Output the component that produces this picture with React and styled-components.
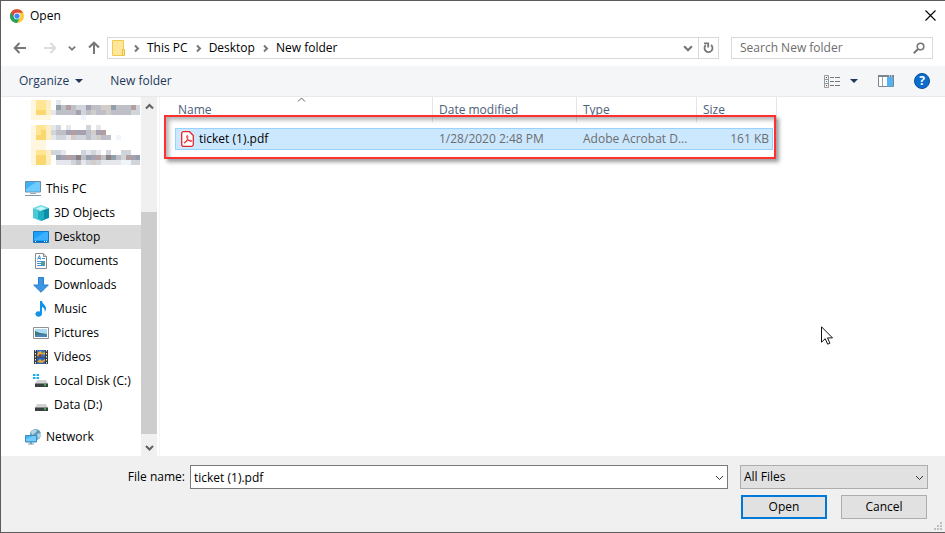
import React, { useState } from 'react';
import styled, { createGlobalStyle } from 'styled-components';

const GlobalStyle = createGlobalStyle`
  * {
    box-sizing: border-box;
  }
  body {
    margin: 0;
    background: white;
    color: black;
  }
  body, button, input, select {
    font-family: 'Open Sans', 'Noto Sans', sans-serif;
    font-size: 12px;
    line-height: 16px;
  }
  button {
    padding: 0;
    border: none;
    background: none;
    color: inherit;
  }
  svg {
    display: block;
    flex: none;
  }
`;

const Dialog = styled.div`
  position: relative;
  display: flex;
  flex-direction: column;
  min-height: 100vh;
  border: 1px solid #5c5c5c;
  border-right: none;
  background: white;
`;
const TitleBar = styled.header`
  display: flex;
  align-items: center;
  gap: 6px;
  height: 29px;
  padding: 0 9px;
`;
const Title = styled.h1`
  flex: 1;
  margin: 0;
  font-size: 12px;
  font-weight: 400;
`;
const NavBar = styled.div`
  display: flex;
  align-items: center;
  height: 36px;
  padding: 0 12px;
`;
const History = styled.div`
  display: flex;
  align-items: center;
  gap: 11px;
  margin-right: 6px;
`;
const HistoryButton = styled.button`
  &:first-child {
    margin-right: 5px;
  }
`;
const AddressBar = styled.div`
  display: flex;
  flex: 1;
  height: 22px;
  margin-right: 12px;
  border: 1px solid #d9d9d9;
`;
const Crumbs = styled.nav`
  display: flex;
  flex: 1;
  align-items: center;
  gap: 6px;
  padding-left: 4px;
`;
const AddressButton = styled.button`
  display: flex;
  align-items: center;
  justify-content: center;
  width: 20px;
  border-left: ${({ $divided }) => ($divided ? '1px solid #d9d9d9' : 'none')};
`;
const SearchBox = styled.label`
  display: flex;
  align-items: center;
  width: 202px;
  height: 22px;
  padding: 0 7px;
  border: 1px solid #d9d9d9;
`;
const SearchInput = styled.input`
  flex: 1;
  min-width: 0;
  padding: 0 0 0 1px;
  border: none;
  outline: none;
  &::placeholder {
    color: #6d6d6d;
  }
`;
const Toolbar = styled.div`
  display: flex;
  align-items: center;
  gap: 27px;
  height: 31px;
  padding: 0 15px 0 18px;
  border-bottom: 1px solid #e8e9ea;
  background: #f5f6f7;
  color: #1e395b;
`;
const ToolButton = styled.button`
  display: flex;
  align-items: center;
  gap: ${({ $gap }) => $gap || 6}px;
`;
const Tools = styled.div`
  display: flex;
  align-items: center;
  gap: 20px;
  margin-left: auto;
`;
const HelpMark = styled.span`
  display: flex;
  align-items: center;
  justify-content: center;
  width: 16px;
  height: 16px;
  border: 1px solid #0a4f9c;
  border-radius: 50%;
  background: #0a6cce;
  color: white;
  font-weight: 700;
`;

const Content = styled.div`
  display: flex;
  flex: 1;
`;
const Sidebar = styled.aside`
  display: flex;
  width: 159px;
  padding-right: 2px;
  border-right: 1px solid #f5f5f5;
`;
const Tree = styled.ul`
  display: flex;
  flex: 1;
  flex-direction: column;
  gap: 8px;
  margin: 0;
  padding: 0;
  list-style: none;
`;
const TreeItem = styled.button`
  display: flex;
  align-items: center;
  gap: 5px;
  width: 100%;
  height: 24px;
  padding-left: ${({ $nested }) => ($nested ? 32 : 24)}px;
  background: ${({ $selected }) => ($selected ? '#d9d9d9' : 'none')};
  text-align: left;
  white-space: nowrap;
`;
const Scrollbar = styled.div`
  display: flex;
  flex-direction: column;
  width: 16px;
  background: #f0f0f0;
`;
const ScrollButton = styled.button`
  display: flex;
  align-items: center;
  justify-content: center;
  height: 18px;
`;
const ScrollThumb = styled.div`
  flex: 222;
  margin-bottom: 4px;
  background: #cdcdcd;
`;
const ScrollSpace = styled.div`
  flex: 97;
`;

const FileArea = styled.main`
  position: relative;
  flex: 1;
  padding-left: 15px;
`;
const FileTable = styled.table`
  display: block;
  width: 602px;
  color: #6d6d6d;
  thead,
  tbody {
    display: block;
  }
`;
const HeadRow = styled.tr`
  display: grid;
  grid-template-columns: 258px 144px 120px 80px;
  height: 25px;
`;
const HeadCell = styled.th`
  position: relative;
  padding: 5px 6px 0 ${({ $first }) => ($first ? 3 : 6)}px;
  border-right: 1px solid #e5e5e5;
  color: #4c607a;
  font-weight: 400;
  text-align: left;
`;
const SortMark = styled.span`
  position: absolute;
  top: -2px;
  right: 4px;
  left: 0;
  display: flex;
  justify-content: center;
`;
const FileRow = styled.tr`
  display: grid;
  grid-template-columns: 258px 144px 120px 1fr;
  align-items: center;
  height: 22px;
  margin: 0 4px 0 0;
  background: #cce8ff;
  outline: 1px solid #99d1ff;
  outline-offset: -1px;
`;
const FileRows = styled.tbody`
  padding-top: 6px;
`;
const FileCell = styled.td`
  display: flex;
  justify-content: ${({ $right }) => ($right ? 'flex-end' : 'flex-start')};
  align-items: center;
  gap: 5px;
  padding: 0 4px 0 6px;
  color: ${({ $strong }) => ($strong ? 'black' : 'inherit')};
  white-space: nowrap;
`;
const Highlight = styled.div`
  position: absolute;
  top: 18px;
  left: 4px;
  width: 612px;
  height: 44px;
  border: 2px solid #ff3030;
  box-shadow:
    3px 3px 4px rgba(0, 0, 0, 0.4),
    inset 3px 3px 4px rgba(0, 0, 0, 0.3);
  pointer-events: none;
`;
const Pointer = styled.div`
  position: absolute;
  top: 229px;
  left: 661px;
`;

const Footer = styled.form`
  position: relative;
  padding: 9px 17px 13px 0;
  background: #f0f0f0;
`;
const FieldRow = styled.div`
  display: flex;
  align-items: center;
`;
const FileLabel = styled.label`
  width: 189px;
  padding-right: 5px;
  text-align: right;
`;
const Field = styled.div`
  position: relative;
  display: flex;
  align-items: center;
  flex: ${({ $width }) => ($width ? `0 0 ${$width}px` : '1')};
  margin-right: ${({ $width }) => ($width ? 0 : 12)}px;
`;
const FileInput = styled.input`
  width: 100%;
  height: 24px;
  padding: 0 24px 0 3px;
  border: 1px solid #7a7a7a;
  border-radius: 0;
  background: white;
  outline: none;
`;
const TypeSelect = styled.select`
  width: 100%;
  height: 24px;
  padding: 0 24px 0 3px;
  appearance: none;
  border: 1px solid #adadad;
  border-radius: 0;
  background: #e1e1e1;
  color: black;
`;
const FieldArrow = styled.span`
  position: absolute;
  right: 4px;
  pointer-events: none;
`;
const Actions = styled.div`
  display: flex;
  justify-content: flex-end;
  gap: 14px;
  margin-top: 6px;
  padding-right: 1px;
`;
const ActionButton = styled.button`
  width: 86px;
  height: 24px;
  border: ${({ $primary }) => ($primary ? '2px solid #0078d7' : '1px solid #adadad')};
  background: #e1e1e1;
`;
const Grip = styled.div`
  position: absolute;
  right: 3px;
  bottom: 2px;
`;

function Chevron({ dir = 'down', size = 9, color = '#606060', weight = 2 }) {
  const paths = {
    down: 'M1 3l3.5 3.5L8 3',
    up: 'M1 6.5L4.5 3L8 6.5',
    right: 'M3 1.5l3 3-3 3',
  };
  return (
    <svg width={size} height={size} viewBox="0 0 9 9" fill="none" stroke={color} strokeWidth={weight}>
      <path d={paths[dir]} />
    </svg>
  );
}

function Arrow({ dir, color = '#777' }) {
  const turn = { left: 0, right: 180, up: 90 }[dir];
  return (
    <svg width="14" height="14" viewBox="0 0 14 14" fill="none" stroke={color} strokeWidth="2">
      <path transform={`rotate(${turn} 7 7)`} d="M13 7H2M6.5 2L1.7 7l4.800 5" />
    </svg>
  );
}

function Triangle() {
  return (
    <svg width="8" height="4" viewBox="0 0 8 4">
      <path d="M0 0h8L4 4z" fill="#1e395b" />
    </svg>
  );
}

function ChromeIcon() {
  return (
    <svg width="14" height="14" viewBox="0 0 48 48">
      <circle cx="24" cy="24" r="24" fill="#fcc934" />
      <path d="M24 24L3.200 12A24 24 0 0 0 24 48l10.400-18z" fill="#1ea362" />
      <path d="M24 13h20.800A24 24 0 0 0 3.200 12L14.500 30z" fill="#dd4b3e" />
      <circle cx="24" cy="24" r="11.500" fill="#fff" />
      <circle cx="24" cy="24" r="9" fill="#4285f4" />
    </svg>
  );
}

function CloseIcon() {
  return (
    <svg width="11" height="11" viewBox="0 0 11 11" stroke="#000" strokeWidth="1.1">
      <path d="M.5.5l10 10M10.500.5l-10 10" />
    </svg>
  );
}

function FolderIcon() {
  return (
    <svg width="14" height="16" viewBox="0 0 14 16">
      <path d="M.5.5h11v15H.5z" fill="#ffe69a" stroke="#f2c94f" />
      <path d="M10.500 9.500h2v6h-2z" fill="#ffe69a" stroke="#eabf3d" />
    </svg>
  );
}

function RefreshIcon() {
  return (
    <svg width="11" height="12" viewBox="0 0 11 12" fill="none" stroke="#777" strokeWidth="1.8">
      <path d="M2.800 3.200A4 4 0 1 0 8 3" />
      <path d="M1 1.400h4.200v4" />
    </svg>
  );
}

function SearchIcon() {
  return (
    <svg width="12" height="12" viewBox="0 0 12 12" fill="none" stroke="#777">
      <circle cx="7.500" cy="4.500" r="3.300" strokeWidth="1.600" />
      <path d="M5 7L.8 11.200" strokeWidth="2" />
    </svg>
  );
}

function ViewIcon() {
  return (
    <svg width="16" height="13" viewBox="0 0 16 13" fill="none">
      <path d="M.5.5h4v12h-4zM.5 4.500h4M.5 8.500h4" stroke="#9a9a9a" />
      <path d="M6 2.500h4M11 2.500h5M6 6.500h4M11 6.500h5M6 10.500h4M11 10.500h5" stroke="#777" />
      <path d="M2 2h1v1H2z" fill="#444" />
      <path d="M2 6h1v1H2z" fill="#2e8ae0" />
      <path d="M2 10h1v1H2z" fill="#c22" />
    </svg>
  );
}

function PreviewIcon() {
  return (
    <svg width="16" height="12" viewBox="0 0 16 12">
      <path d="M.5.5h15v11H.5z" fill="#fff" stroke="#7b8790" />
      <path d="M0 0h16v2H0z" fill="#7b8790" />
      <path d="M4.500 2v9" stroke="#9aa4ab" />
      <path d="M9 2h6v9.500H9z" fill="#55b1f1" />
      <path d="M11 1h1M13 1h1" stroke="#fff" />
    </svg>
  );
}

function PcIcon() {
  return (
    <svg width="16" height="16" viewBox="0 0 16 16">
      <path d="M.5.5h15v10.500H.5z" fill="#3fb1f7" stroke="#6e8da3" />
      <path d="M1 10.500V8L11 1h4v9.500z" fill="#6fcbff" />
      <path d="M5 12h6v1H5z" fill="#9ab" />
      <path d="M0 14.500h16" stroke="#8298a8" />
    </svg>
  );
}

function ObjectsIcon() {
  return (
    <svg width="16" height="16" viewBox="0 0 16 16">
      <path d="M0 3l8-3 8 3-8 3z" fill="#6fdbe4" />
      <path d="M0 3l8 3v10l-8-3z" fill="#4cc8d6" />
      <path d="M16 3L8 6v10l8-3z" fill="#0c8fa6" />
      <path d="M5 6l3 1 3-1v8l-3 1-3-1z" fill="#20aec2" />
      <path d="M3 3.500l5-2 5 2-5 2z" fill="#c9f3f6" />
    </svg>
  );
}

function DesktopIcon() {
  return (
    <svg width="16" height="12" viewBox="0 0 16 12">
      <path d="M.5.5h15v11H.5z" fill="#18a0fb" stroke="#1579c4" />
      <path d="M1 8L12 1h3v8H1z" fill="#3db1ff" />
      <path d="M1 10.500h14" stroke="#106ab8" />
      <path d="M2 10.500h1M11 10.500h1M13 10.500h1" stroke="#fff" />
    </svg>
  );
}

function DocumentIcon() {
  return (
    <svg width="16" height="16" viewBox="0 0 16 16">
      <path d="M2.500.5h8l3 3v12h-11z" fill="#fff" stroke="#8b8b8b" />
      <path d="M10.500.5v3h3" fill="#ddd" stroke="#8b8b8b" />
      <path
        d="M4.500 6.500l2-4 1 4M5 5.500h3M9 5.500h3M4 8.500h8M4 10.500h4M4 12.500h8"
        fill="none"
        stroke="#3f95d6"
      />
      <path d="M8 9h4v3H8z" fill="#5b9c90" />
    </svg>
  );
}

function DownloadIcon() {
  return (
    <svg width="16" height="16" viewBox="0 0 16 16">
      <path d="M5.500.5h5v7.500h4.800L8 15.300.7 8h4.800z" fill="#3b97e3" stroke="#2b7fc9" />
    </svg>
  );
}

function MusicIcon() {
  return (
    <svg width="16" height="16" viewBox="0 0 16 16">
      <path
        d="M7 0h2c.3 3 4 4 4 7.500 0 1.500-.6 2.700-1.300 3.500.5-3-1-4.500-2.700-5v7a3.300 2.700 0 1 1-2-2.500z"
        fill="#1292e8"
      />
    </svg>
  );
}

function PictureIcon() {
  return (
    <svg width="16" height="12" viewBox="0 0 16 12">
      <path d="M.5.5h15v11H.5z" fill="#fff" stroke="#929292" />
      <path d="M2 2h12v8H2z" fill="#aadcf8" />
      <path d="M2 4l5 2 7 1v3H2z" fill="#39776f" />
      <path d="M2 8c4-1 8 0 12-1v3H2z" fill="#4884b9" />
    </svg>
  );
}

function VideoIcon() {
  return (
    <svg width="16" height="16" viewBox="0 0 16 16">
      <path d="M1 1h14v14H1z" fill="#3b3b3b" />
      <path d="M4 1h8v7H4z" fill="#3474c4" />
      <path d="M4 8.500h8V15H4z" fill="#2b66b8" />
      <path d="M5 3l3-1 1 2 3-1v3L9 5 7 7H4zM4 13l3-3 2 2 3-2v2l-3 2z" fill="#e0a83c" />
      <path d="M7 5l2 1-1 2-3-1z" fill="#8e3f35" />
      <path d="M2.500 1v14M13.500 1v14" stroke="#e9e9e9" strokeDasharray="1.500 1.500" />
    </svg>
  );
}

function DiskIcon({ system }) {
  return (
    <svg width="16" height="16" viewBox="0 0 16 16">
      {system && (
        <path d="M0 1h2.500v2H0zM3.500 1H6v2H3.500zM0 4h2.500v2H0zM3.500 4H6v2H3.500z" fill="#12b0ef" />
      )}
      <path d="M4 7h9l2 4H2z" fill="#cfd1d2" />
      <path d="M2 10.500h13V14H2z" fill="#3c4043" />
      <path d="M11 12h2" stroke="#35d04c" strokeWidth="1.500" />
    </svg>
  );
}

function NetworkIcon() {
  return (
    <svg width="16" height="16" viewBox="0 0 16 16">
      <circle cx="10.500" cy="5.500" r="5.500" fill="#5f9cc0" />
      <path d="M6 3c2-3 5-3 6-1L9 5 7 6zM12 5l4-1v3l-3 3z" fill="#b6d5e3" />
      <path d="M.5 6.500h11v6.500H.5z" fill="#42b6f6" stroke="#4689b4" />
      <path d="M1 12V10l7-3h3v5z" fill="#72cdfc" />
      <path d="M5 13h2v1.500H5zM3 14.500h6v1H3z" fill="#7d9bac" />
    </svg>
  );
}

function PdfIcon() {
  return (
    <svg width="13" height="16" viewBox="0 0 13 16" fill="none" stroke="#e8252a">
      <path
        d="M2.500.7h6L12.300 4.500v9q0 1.800-1.800 1.800h-8Q.7 15.300.7 13.500v-11Q.7.7 2.500.7z"
        fill="#fff"
        strokeWidth="1.300"
      />
      <path
        d="M6.300 4.500c-1 0-.8 1.500 0 3S9 10.500 10 10.500s1-1.200-.5-1.200c-2 0-4 .6-5.200 1.300-1.600 1-1.200 1.700-.6 1.500C5 11.500 6.300 9 6.600 7.500 7 6 7 4.500 6.300 4.500z"
        strokeWidth="1"
      />
    </svg>
  );
}

// masked quick access entries, one character per 5px block
const maskColors = {
  a: '#fff6e0', b: '#ffe594', c: '#fbd86f', d: '#fdeec2',
  0: '#f0f5fb', 1: '#e6e7ec', 2: '#d0d5dc', 3: '#bfbfc8', 4: '#a5a1b0',
  5: '#929eac', 6: '#d3cdca', 7: '#b59e9f', 8: '#8d8083',
};
const maskRows = [
  'abbd.1',
  'abbd.53732243366533372',
  'accd133334236336333322',
  'aaaa......0',
  '',
  'abbd12.1...2.1',
  'abcd23347443647',
  'accd122162232633.0',
  'aaa',
  'aaa',
  'abbd221...2121.2..22',
  'accd.54748354738532745',
  'accd.11123126211110022',
];

function MaskedEntries() {
  return (
    <svg width="139" height="72" viewBox="0 0 139 72">
      {maskRows.map((row, y) =>
        [...row.replace(/\s/g, '')].map((key, x) =>
          maskColors[key] ? (
            <rect key={x} x={30 + x * 5} y={3 + y * 5} width="5" height="5" fill={maskColors[key]} />
          ) : null,
        ),
      )}
    </svg>
  );
}

const places = [
  { name: '3D Objects', icon: <ObjectsIcon /> },
  { name: 'Desktop', icon: <DesktopIcon /> },
  { name: 'Documents', icon: <DocumentIcon /> },
  { name: 'Downloads', icon: <DownloadIcon /> },
  { name: 'Music', icon: <MusicIcon /> },
  { name: 'Pictures', icon: <PictureIcon /> },
  { name: 'Videos', icon: <VideoIcon /> },
  { name: 'Local Disk (C:)', icon: <DiskIcon system /> },
  { name: 'Data (D:)', icon: <DiskIcon /> },
];
const crumbs = ['This PC', 'Desktop', 'New folder'];

function App() {
  const [place, setPlace] = useState('Desktop');
  const [fileName, setFileName] = useState('ticket (1).pdf');
  const [search, setSearch] = useState('');

  return (
    <>
      <GlobalStyle />
      <Dialog>
        <TitleBar>
          <ChromeIcon />
          <Title>Open</Title>
          <button type="button" aria-label="Close">
            <CloseIcon />
          </button>
        </TitleBar>
        <NavBar>
          <History>
            <HistoryButton type="button" aria-label="Back">
              <Arrow dir="left" />
            </HistoryButton>
            <HistoryButton type="button" aria-label="Forward">
              <Arrow dir="right" color="#dcdcdc" />
            </HistoryButton>
            <HistoryButton type="button" aria-label="Recent locations">
              <Chevron size={8} color="#777" />
            </HistoryButton>
            <HistoryButton type="button" aria-label="Up">
              <Arrow dir="up" />
            </HistoryButton>
          </History>
          <AddressBar>
            <Crumbs>
              <FolderIcon />
              {crumbs.map((crumb) => (
                <React.Fragment key={crumb}>
                  <Chevron dir="right" color="#777" />
                  <button type="button">{crumb}</button>
                </React.Fragment>
              ))}
            </Crumbs>
            <AddressButton type="button" aria-label="Previous locations">
              <Chevron size={10} color="#777" />
            </AddressButton>
            <AddressButton type="button" aria-label="Refresh" $divided>
              <RefreshIcon />
            </AddressButton>
          </AddressBar>
          <SearchBox>
            <SearchInput
              value={search}
              onChange={(event) => setSearch(event.target.value)}
              placeholder="Search New folder"
              aria-label="Search New folder"
            />
            <SearchIcon />
          </SearchBox>
        </NavBar>
        <Toolbar>
          <ToolButton type="button">
            Organize <Triangle />
          </ToolButton>
          <ToolButton type="button">New folder</ToolButton>
          <Tools>
            <ToolButton type="button" aria-label="Change view" $gap={10}>
              <ViewIcon />
              <Triangle />
            </ToolButton>
            <ToolButton type="button" aria-label="Preview pane">
              <PreviewIcon />
            </ToolButton>
            <ToolButton type="button" aria-label="Help">
              <HelpMark>?</HelpMark>
            </ToolButton>
          </Tools>
        </Toolbar>
        <Content>
          <Sidebar>
            <Tree>
              <li>
                <MaskedEntries />
              </li>
              <li>
                <TreeItem type="button">
                  <PcIcon />
                  This PC
                </TreeItem>
                {places.map(({ name, icon }) => (
                  <TreeItem
                    key={name}
                    type="button"
                    $nested
                    $selected={name === place}
                    onClick={() => setPlace(name)}
                  >
                    {icon}
                    {name}
                  </TreeItem>
                ))}
              </li>
              <li>
                <TreeItem type="button">
                  <NetworkIcon />
                  Network
                </TreeItem>
              </li>
            </Tree>
            <Scrollbar>
              <ScrollButton type="button" aria-label="Scroll up">
                <Chevron dir="up" />
              </ScrollButton>
              <ScrollSpace />
              <ScrollThumb />
              <ScrollButton type="button" aria-label="Scroll down">
                <Chevron />
              </ScrollButton>
            </Scrollbar>
          </Sidebar>
          <FileArea>
            <FileTable>
              <thead>
                <HeadRow>
                  <HeadCell $first>
                    Name
                    <SortMark>
                      <Chevron dir="up" weight={1} />
                    </SortMark>
                  </HeadCell>
                  <HeadCell>Date modified</HeadCell>
                  <HeadCell>Type</HeadCell>
                  <HeadCell>Size</HeadCell>
                </HeadRow>
              </thead>
              <FileRows>
                <FileRow>
                  <FileCell $strong>
                    <PdfIcon />
                    ticket (1).pdf
                  </FileCell>
                  <FileCell>1/28/2020 2:48 PM</FileCell>
                  <FileCell>Adobe Acrobat D...</FileCell>
                  <FileCell $right>161 KB</FileCell>
                </FileRow>
              </FileRows>
            </FileTable>
            <Highlight />
            <Pointer>
              <svg width="12" height="19" viewBox="0 0 12 19">
                <path d="M.5.8v15.400l3.700-3.500 2.500 5.500 2.200-1-2.400-5.300h5z" fill="#fff" stroke="#111" />
              </svg>
            </Pointer>
          </FileArea>
        </Content>
        <Footer onSubmit={(event) => event.preventDefault()}>
          <FieldRow>
            <FileLabel htmlFor="file-name">File name:</FileLabel>
            <Field>
              <FileInput
                id="file-name"
                value={fileName}
                onChange={(event) => setFileName(event.target.value)}
              />
              <FieldArrow>
                <Chevron weight={1} color="#333" />
              </FieldArrow>
            </Field>
            <Field $width={188}>
              <TypeSelect aria-label="File type">
                <option>All Files</option>
              </TypeSelect>
              <FieldArrow>
                <Chevron weight={1} color="#333" />
              </FieldArrow>
            </Field>
          </FieldRow>
          <Actions>
            <ActionButton type="submit" $primary>
              Open
            </ActionButton>
            <ActionButton type="button">Cancel</ActionButton>
          </Actions>
          <Grip>
            <svg width="8" height="8" viewBox="0 0 8 8">
              <path
                d="M6 0h2v2H6zM3 3h2v2H3zM6 3h2v2H6zM0 6h2v2H0zM3 6h2v2H3zM6 6h2v2H6z"
                fill="#bfbfbf"
              />
            </svg>
          </Grip>
        </Footer>
      </Dialog>
    </>
  );
}

export default App;
